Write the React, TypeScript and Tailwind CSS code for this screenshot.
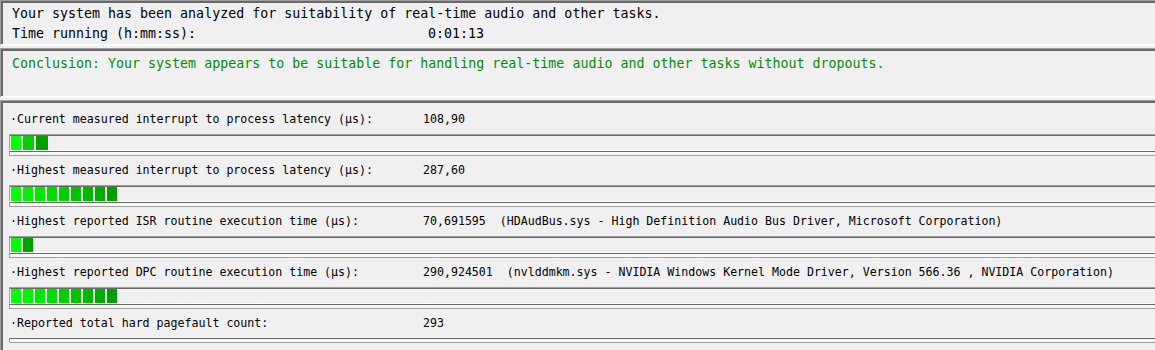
import React from 'react';

type Row = {
  label: string;
  value: string;
  extra?: string;
  segments: number[] | null;
};

const rows: Row[] = [
  { label: 'Current measured interrupt to process latency (µs):', value: '108,90', segments: [10, 11, 12] },
  { label: 'Highest measured interrupt to process latency (µs):', value: '287,60', segments: [10, 10, 10, 10, 10, 10, 10, 10, 10] },
  {
    label: 'Highest reported ISR routine execution time (µs):',
    value: '70,691595',
    extra: '(HDAudBus.sys - High Definition Audio Bus Driver, Microsoft Corporation)',
    segments: [10, 10],
  },
  {
    label: 'Highest reported DPC routine execution time (µs):',
    value: '290,924501',
    extra: '(nvlddmkm.sys - NVIDIA Windows Kernel Mode Driver, Version 566.36 , NVIDIA Corporation)',
    segments: [10, 10, 10, 10, 10, 10, 10, 10, 10],
  },
  { label: 'Reported total hard pagefault count:', value: '293', segments: null },
];

const mono = { fontFamily: '"DejaVu Sans Mono", "Liberation Mono", monospace' };

// colour of one block, bright green at the left, darker towards the end of the bar
function segColor(i: number, n: number) {
  const t = n > 1 ? i / (n - 1) : 0;
  const g = Math.round(255 - t * (255 - 160));
  return `rgb(0, ${g}, 0)`;
}

function Bar({ widths }: { widths: number[] }) {
  return (
    <div className="h-[17px] border-t border-l border-b border-t-[#a0a0a0] border-l-[#a0a0a0] border-b-white shadow-[inset_0_1px_0_#696969] pl-[1px] pt-[1px] flex gap-[2px]">
      {widths.map((w, i) => (
        <div key={i} className="h-[14px]" style={{ width: w, backgroundColor: segColor(i, widths.length) }} />
      ))}
    </div>
  );
}

function Separator() {
  return <div className="h-[5px] border-t border-l border-b border-t-[#696969] border-l-[#a0a0a0] border-b-[#a0a0a0] bg-[#f7f7f7]" />;
}

function Panel({ className, children }: { className?: string; children: React.ReactNode }) {
  return (
    <div
      className={`border-t border-l border-b-2 border-t-[#a0a0a0] border-l-[#a0a0a0] border-b-white shadow-[inset_2px_2px_0_#696969] ${className ?? ''}`}
    >
      {children}
    </div>
  );
}

export default function App() {
  return (
    <div className="w-full h-[350px] overflow-hidden bg-[#f0f0f0] text-black" style={mono}>
      <Panel className="h-[46px] pt-[3px] pl-[11px] text-[13.3px]">
        <div className="h-[20px] leading-[20px] whitespace-pre">
          Your system has been analyzed for suitability of real-time audio and other tasks.
        </div>
        <div className="h-[20px] leading-[20px] flex whitespace-pre">
          <span className="w-[416px]">Time running (h:mm:ss):</span>
          <span>0:01:13</span>
        </div>
      </Panel>

      <Panel className="mt-[2px] h-[50px] pt-[5px] pl-[11px] text-[13.3px]">
        <div className="h-[20px] leading-[20px] text-[#078a07] whitespace-pre">
          Conclusion: Your system appears to be suitable for handling real-time audio and other tasks without dropouts.
        </div>
      </Panel>

      <div className="mt-[2px] border-t border-l border-t-[#a0a0a0] border-l-[#a0a0a0] shadow-[inset_2px_2px_0_#696969] pt-[4px] pl-[8px] h-[260px] text-[11.6px]">
        {rows.map((r) => (
          <div key={r.label}>
            <div className="h-[29px] flex items-center pl-[1px] whitespace-pre">
              <span className="w-[413px]">·{r.label}</span>
              <span>{r.value}</span>
              {r.extra && <span>{'  ' + r.extra}</span>}
            </div>
            {r.segments !== null && <Bar widths={r.segments} />}
            <Separator />
          </div>
        ))}
      </div>
    </div>
  );
}
